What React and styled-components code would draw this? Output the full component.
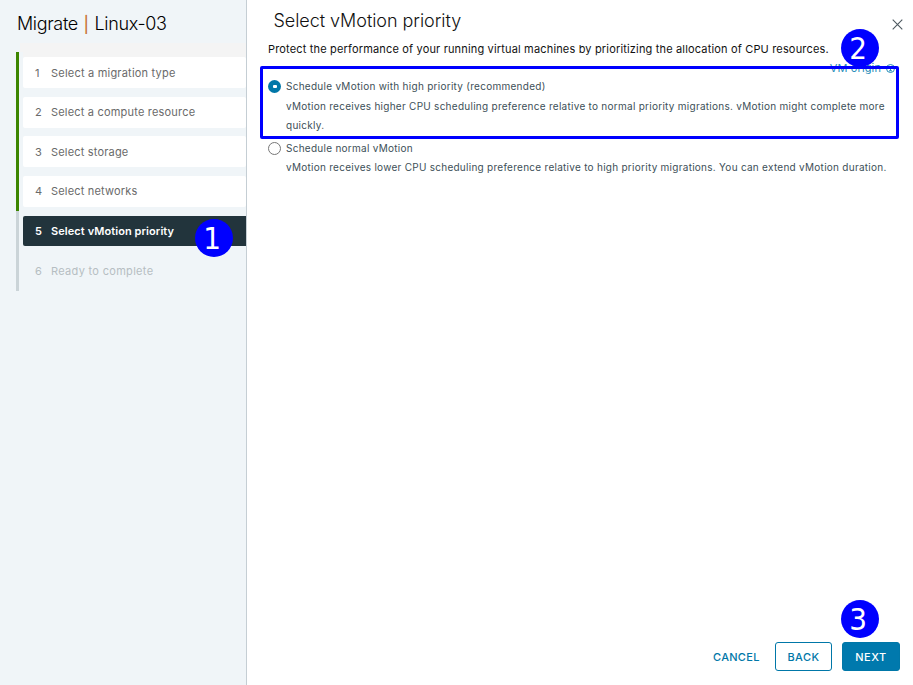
import React from "react";
import styled, { createGlobalStyle } from "styled-components";

const GlobalStyle = createGlobalStyle`
  *, *::before, *::after { box-sizing: border-box; }
  body { margin: 0; background: #fff; font-family: Inter, "Liberation Sans", sans-serif; }
  p, h1, h2, ol { margin: 0; padding: 0; }
  button { font-family: inherit; cursor: pointer; }
`;

const Wizard = styled.div`
  position: relative;
  display: grid;
  grid-template-columns: 247px 1fr;
  width: 913px;
  height: 685px;
  overflow: hidden;
`;

const Sidebar = styled.aside`
  padding-left: 16px;
  background: #f0f5f8;
  border-right: 1px solid #c5ced4;
`;

const WizardTitle = styled.h1`
  height: 52px;
  padding: 13px 0 0 1px;
  background: linear-gradient(#f4f4f4, #f4f4f4) 4px 43px / 100% 9px no-repeat;
  font-size: 18px;
  font-weight: 350;
  line-height: 22px;
  letter-spacing: -0.34px;
  color: #000;
  white-space: nowrap;
`;

const Divider = styled.span`
  margin: 0 1px;
  font-size: 16px;
  font-weight: 500;
  color: #c87a40;
`;

const StepArea = styled.div`
  display: flex;
  height: 239px;
`;

const Track = styled.div`
  flex: 0 0 3px;
  margin-right: 4px;
  background: linear-gradient(#3c8500 159px, #cbd4d8 159px);
`;

const StepList = styled.ol`
  flex: 1;
  display: grid;
  grid-template-rows: 31px 31px 31px 31px 30px 33px;
  row-gap: 8.63px;
  align-content: start;
  padding-top: 5px;
  background: linear-gradient(#f4f4f4, #f4f4f4) 0 0 / 100% 5px no-repeat;
  list-style: none;
`;

const Step = styled.li`
  display: flex;
  align-items: center;
  padding-left: 12px;
  border-radius: ${(p) => (p.$state === "active" ? "2px 0 0 2px" : "2px")};
  font-size: 11px;
  font-weight: ${(p) => (p.$state === "active" ? 600 : 400)};
  letter-spacing: ${(p) => p.$spacing}px;
  color: ${(p) => ({ done: "#6a6a6a", active: "#fff", pending: "#b6bec2" })[p.$state]};
  background: ${(p) => ({ done: "#fff", active: "#22343c", pending: "transparent" })[p.$state]};
  white-space: nowrap;
`;

const StepNumber = styled.span`
  width: 16px;
`;

const Content = styled.main`
  display: flex;
  flex-direction: column;
  padding: 9px 13px 14px 21px;
`;

const Header = styled.header`
  display: flex;
  justify-content: space-between;
  height: 32px;
  padding-left: 5.5px;
`;

const PageTitle = styled.h2`
  font-size: 18px;
  font-weight: 350;
  line-height: 24px;
  letter-spacing: -0.05px;
  color: #111;
`;

const CloseButton = styled.button`
  align-self: flex-start;
  display: flex;
  margin: 10px -3px 0 0;
  padding: 0;
  border: 0;
  background: none;
  color: #4d5960;
`;

const Intro = styled.p`
  height: 20px;
  font-size: 11px;
  line-height: 17px;
  letter-spacing: 0.165px;
  color: #111;
  white-space: nowrap;
`;

const OriginRow = styled.div`
  display: flex;
  justify-content: flex-end;
  align-items: center;
  gap: 5px;
  height: 15px;
  padding: 0 5px 1px 0;
  font-size: 11px;
  letter-spacing: 0.12px;
  color: #248cb8;
`;

const Options = styled.div`
  display: flex;
  flex-direction: column;
  gap: 3px;
`;

const Option = styled.label`
  display: grid;
  grid-template-columns: 18px 1fr;
  margin-right: -6px;
  font-size: 10px;
  color: #3d4f58;
`;

const OptionLabel = styled.span`
  line-height: ${(p) => (p.$tall ? 21 : 20)}px;
  letter-spacing: 0.27px;
`;

const OptionHint = styled.p`
  grid-column: 2;
  line-height: 19px;
  letter-spacing: 0.268px;
`;

const Radio = styled.span`
  align-self: center;
  display: flex;
  align-items: center;
  justify-content: center;
  width: 13px;
  height: 13px;
  border: ${(p) => (p.$checked ? "0" : "1px solid #777")};
  border-radius: 50%;
  background: ${(p) => (p.$checked ? "#0077a8" : "#fff")};

  &::after {
    content: "";
    display: ${(p) => (p.$checked ? "block" : "none")};
    width: 4px;
    height: 3px;
    border-radius: 1px;
    background: #fff;
  }
`;

const Footer = styled.footer`
  display: flex;
  justify-content: flex-end;
  margin-top: auto;
`;

const Button = styled.button`
  width: ${(p) => p.$width}px;
  height: 29px;
  margin-left: ${(p) => p.$gap}px;
  padding: 0;
  border: ${(p) => (p.$kind === "link" ? "0" : "1px solid #0077a8")};
  border-radius: 3px;
  background: ${(p) => (p.$kind === "primary" ? "#0079ad" : "transparent")};
  color: ${(p) => (p.$kind === "primary" ? "#fff" : "#0077a8")};
  font-size: 11px;
  font-weight: ${(p) => (p.$kind === "primary" ? 500 : 450)};
  letter-spacing: ${(p) => p.$spacing}px;
`;

const Highlight = styled.div`
  position: absolute;
  left: 260px;
  top: 66px;
  width: 639px;
  height: 73px;
  border: 3px solid #0000ff;
  border-radius: 2px;
`;

const Badge = styled.div`
  position: absolute;
  left: ${(p) => p.$x}px;
  top: ${(p) => p.$y}px;
  display: flex;
  align-items: center;
  justify-content: center;
  width: 38px;
  height: 38px;
  padding-right: 4px;
  border-radius: 50%;
  background: #0000ff;
  color: #fff;
  font-family: "DejaVu Sans Condensed", "DejaVu Sans", sans-serif;
  font-stretch: condensed;
  font-size: 31px;
  line-height: 38px;
`;

const steps = [
  { label: "Select a migration type", state: "done", spacing: 0.21 },
  { label: "Select a compute resource", state: "done", spacing: 0.19 },
  { label: "Select storage", state: "done", spacing: 0.18 },
  { label: "Select networks", state: "done", spacing: 0.18 },
  { label: "Select vMotion priority", state: "active", spacing: 0.08 },
  { label: "Ready to complete", state: "pending", spacing: 0.31 },
];

const CloseIcon = () => (
  <svg width="11" height="11" viewBox="0 0 11 11" stroke="currentColor" strokeWidth="1.1">
    <path d="M.7.7l9.6 9.6M10.3.7L.7 10.3" />
  </svg>
);

const InfoIcon = () => (
  <svg width="9" height="9" viewBox="0 0 9 9" fill="none" stroke="currentColor">
    <circle cx="4.5" cy="4.5" r="4" />
    <path d="M4.5 2v1M3.5 4h1v2.8M3 6.8h3" />
  </svg>
);

export default function App() {
  return (
    <Wizard>
      <GlobalStyle />
      <Sidebar>
        <WizardTitle>
          Migrate <Divider>|</Divider> Linux-03
        </WizardTitle>
        <StepArea>
          <Track />
          <StepList>
            {steps.map((step, i) => (
              <Step key={step.label} $state={step.state} $spacing={step.spacing}>
                <StepNumber>{i + 1}</StepNumber>
                {step.label}
              </Step>
            ))}
          </StepList>
        </StepArea>
      </Sidebar>
      <Content>
        <Header>
          <PageTitle>Select vMotion priority</PageTitle>
          <CloseButton aria-label="Close">
            <CloseIcon />
          </CloseButton>
        </Header>
        <Intro>
          Protect the performance of your running virtual machines by prioritizing the allocation of CPU resources.
        </Intro>
        <OriginRow>
          VM origin <InfoIcon />
        </OriginRow>
        <Options>
          <Option>
            <Radio $checked />
            <OptionLabel $tall>Schedule vMotion with high priority (recommended)</OptionLabel>
            <OptionHint>
              vMotion receives higher CPU scheduling preference relative to normal priority migrations. vMotion might complete more
              quickly.
            </OptionHint>
          </Option>
          <Option>
            <Radio />
            <OptionLabel>Schedule normal vMotion</OptionLabel>
            <OptionHint>
              vMotion receives lower CPU scheduling preference relative to high priority migrations. You can extend vMotion duration.
            </OptionHint>
          </Option>
        </Options>
        <Footer>
          <Button $kind="link" $width={46} $gap={0} $spacing={0.3}>CANCEL</Button>
          <Button $kind="outline" $width={57} $gap={16} $spacing={0.5}>BACK</Button>
          <Button $kind="primary" $width={58} $gap={10} $spacing={0.5}>NEXT</Button>
        </Footer>
      </Content>
      <Highlight />
      <Badge $x={195} $y={219}>1</Badge>
      <Badge $x={841} $y={29}>2</Badge>
      <Badge $x={841} $y={600}>3</Badge>
    </Wizard>
  );
}
